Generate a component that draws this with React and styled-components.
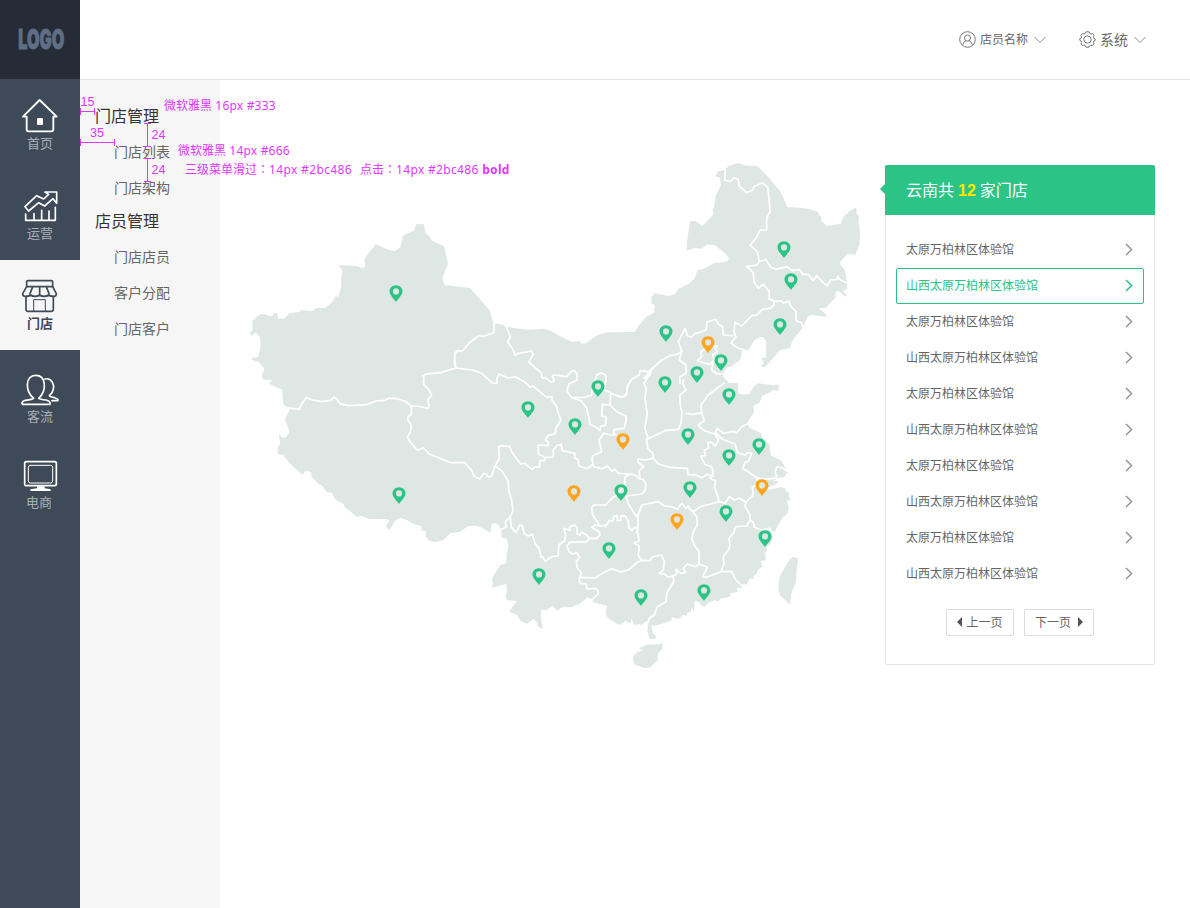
import React from "react";
import styled, { createGlobalStyle, css } from "styled-components";

const GlobalStyle = createGlobalStyle`
  * { box-sizing: border-box; }
  body {
    margin: 0;
    background: #fff;
    color: #666;
    font-family: "Noto Sans", "Noto Sans CJK SC", sans-serif;
    font-size: 12px;
  }
`;

const Page = styled.div`
  position: relative;
  display: flex;
  width: 1190px;
  height: 908px;
  overflow: hidden;
`;

const Sidebar = styled.nav`
  width: 80px;
  flex: none;
  background: #3f4a58;
`;

const LogoBox = styled.div`
  height: 79px;
  margin-bottom: 1px;
  background: #262c36;
  display: flex;
  align-items: center;
  justify-content: center;
`;

const LogoText = styled.span`
  margin-left: 2px;
  color: #5f6f87;
  font-family: Inter, sans-serif;
  font-size: 27px;
  font-weight: 900;
  line-height: 40px;
  -webkit-text-stroke: 0.9px #5f6f87;
  transform: scaleX(0.6);
`;

const NavItem = styled.a`
  display: flex;
  flex-direction: column;
  align-items: center;
  height: 90px;
  padding-top: ${(p) => p.$top}px;
  font-size: 13px;
  line-height: 20px;
  color: #a9afb6;
  svg { display: block; }
  ${(p) =>
    p.$active &&
    css`
      background: #f6f6f6;
      color: #3f4a58;
      font-weight: 700;
    `}
`;

const NavLabel = styled.span`
  margin-top: ${(p) => p.$gap}px;
  margin-left: ${(p) => p.$shift || 0}px;
`;

const Body = styled.div`
  flex: 1;
  display: flex;
  flex-direction: column;
`;

const Header = styled.header`
  height: 80px;
  border-bottom: 1px solid #e5e5e5;
  display: flex;
  align-items: center;
  justify-content: flex-end;
  gap: 33px;
  padding: 0 44px 0 0;
`;

const HeaderItem = styled.div`
  display: flex;
  align-items: center;
  gap: 4px;
  font-size: ${(p) => p.$size}px;
  line-height: 18px;
  white-space: nowrap;
`;

const Content = styled.div`
  flex: 1;
  display: flex;
  align-items: flex-start;
`;

const SubMenu = styled.aside`
  width: 140px;
  height: 828px;
  flex: none;
  padding-top: 21px;
  background: #f6f6f6;
`;

const MenuTitle = styled.div`
  height: 33px;
  padding-left: 15px;
  font-size: 16px;
  line-height: 30px;
  color: #333;
`;

const MenuLink = styled.a`
  display: block;
  padding-left: 34px;
  font-size: 14px;
  line-height: 36px;
  color: #666;
`;

const MapArea = styled.div`
  width: 630px;
  height: 530px;
  margin: 70px 15px 0 20px;
  flex: none;
  svg { display: block; }
`;

const Panel = styled.section`
  position: relative;
  width: 270px;
  height: 500px;
  margin-top: 85px;
  border: 1px solid #e6e6e6;
  border-top: 0;
  border-radius: 2px;
`;

const PanelHeader = styled.div`
  height: 50px;
  margin: 0 -1px;
  padding-left: 21px;
  border-radius: 2px 2px 0 0;
  background: #2bc486;
  color: #fff;
  font-size: 16px;
  line-height: 50px;
  b {
    margin: 0 4px;
    color: #ffe800;
    font-family: "Liberation Sans", sans-serif;
  }
  &::before {
    content: "";
    position: absolute;
    left: -6px;
    top: 19px;
    border: 5px solid transparent;
    border-left: 0;
    border-right-color: #2bc486;
  }
`;

const StoreList = styled.div`
  padding: 17px 10px 0;
`;

const StoreRow = styled.div`
  display: flex;
  align-items: center;
  justify-content: space-between;
  height: 36px;
  padding: 0 10px 2px 9px;
  border: 1px solid ${(p) => (p.$active ? "#2bc486" : "transparent")};
  border-radius: 2px;
  color: ${(p) => (p.$active ? "#2bc486" : "#666")};
`;

const Pager = styled.div`
  display: flex;
  gap: 10px;
  padding: 17px 0 0 60px;
`;

const PageButton = styled.button`
  display: flex;
  align-items: center;
  justify-content: center;
  gap: ${(p) => p.$gap}px;
  width: ${(p) => p.$width}px;
  height: 27px;
  padding: 0 0 1px;
  border: 1px solid #ddd;
  border-radius: 1px;
  background: #fff;
  color: #666;
  font: inherit;
`;

const Note = styled.span`
  position: absolute;
  left: ${(p) => p.$x}px;
  top: ${(p) => p.$y}px;
  color: #df37ff;
  font-family: ${(p) => (p.$digits ? '"Liberation Sans"' : '"Noto Sans", "Noto Sans CJK SC"')}, sans-serif;
  font-size: ${(p) => (p.$digits ? 12.5 : 12)}px;
  line-height: 16px;
  white-space: pre;
`;

const Latin = styled.span`
  letter-spacing: ${(p) => p.$spacing}px;
`;

const Colon = styled.span`
  font-family: "Noto Sans CJK TC", sans-serif;
`;

const Measure = styled.i`
  position: absolute;
  left: ${(p) => p.$x}px;
  top: ${(p) => p.$y}px;
  ${(p) =>
    p.$vertical
      ? css`
          width: 7px;
          height: ${p.$length}px;
          border: solid #df37ff;
          border-width: 1px 0;
          background: linear-gradient(#df37ff, #df37ff) 3px 0 / 1px 100% no-repeat;
        `
      : css`
          width: ${p.$length}px;
          height: 7px;
          border: solid #df37ff;
          border-width: 0 1px;
          background: linear-gradient(#df37ff, #df37ff) 0 3px / 100% 1px no-repeat;
        `}
`;

/* ---- icons, drawn on a grid of three units per pixel ---- */

const Icon = ({ box, children, width = 5 }) => {
  const [, , w, h] = box.split(" ").map(Number);
  return (
    <svg width={w / 3} height={h / 3} viewBox={box} fill="none" stroke="currentColor"
      strokeWidth={width} strokeLinejoin="round" strokeLinecap="round">
      {children}
    </svg>
  );
};

const White = styled.span`
  color: #fff;
`;

const HomeIcon = () => (
  <Icon box="60 294 120 105" width={5.5}>
    <path d="M80 350H69L119 300L170 350H160V388Q160 394 154 394H86Q80 394 80 388Z" />
    <rect x="111" y="354" width="18" height="21" rx="3" fill="currentColor" stroke="none" />
  </Icon>
);

const ChartIcon = () => (
  <Icon box="60 570 120 96">
    <path d="M75 620L110 587L131 597L146 583L135 576H170V610L159 596L134 618L116 608L86 633Z" />
    <path d="M77 642V661H166V622M102 659V641M125 659V631M147 659V633" />
  </Icon>
);

const StoreIcon = () => (
  <Icon box="60 72 120 102" width={5}>
    <path d="M80 95V80Q80 77 84 77H154Q158 77 158 80V95Z" />
    <path d="M80 95L68 116Q68 124 77 124Q87 124 92 120Q97 124 105 124Q114 124 119 120Q124 124 132 124Q141 124 146 120Q151 124 160 124Q169 124 169 116L158 95M97 98L90 116M119 98V116M140 98L147 116" />
    <path d="M78 125V163Q78 169 84 169H154Q160 169 160 163V125" />
    <path d="M101 168V134H136V168" strokeWidth="3" />
  </Icon>
);

const PeopleIcon = () => (
  <Icon box="60 354 120 99" width={5}>
    <path d="M101 430C74 407 76 361 107 361C139 361 141 407 116 430Q120 433 138 435Q153 439 150 448H67Q62 441 76 436Q98 433 101 430Z" />
    <path d="M135 372C157 367 163 392 160 402C158 414 153 417 148 422Q150 426 164 428Q178 433 173 437H156" />
  </Icon>
);

const MonitorIcon = () => (
  <Icon box="60 615 120 96">
    <rect x="74" y="620" width="95" height="72" rx="5" />
    <rect x="85" y="631" width="73" height="53" rx="6" strokeWidth="3" />
    <path d="M111 694H134V700L152 703V708H91V703L111 700Z" fill="currentColor" stroke="none" />
  </Icon>
);

const UserIcon = () => (
  <svg width="17" height="17" viewBox="0 0 17 17" fill="none" stroke="#777" strokeWidth="1">
    <circle cx="8.5" cy="8.5" r="7.8" />
    <circle cx="8.5" cy="7" r="3" />
    <path d="M3.8 13.6C4.2 11.3 5.8 10.2 7 9.8M13.2 13.6C12.8 11.3 11.2 10.2 10 9.8" />
  </svg>
);

const GearIcon = () => (
  <svg width="17" height="17" viewBox="0 0 17 17" fill="none" stroke="#777" strokeWidth="1" strokeLinejoin="round">
    <path d="M7 .8H10L10.6 2.3L12.1 3L13.7 2.5L15 4.4L14.4 5.8L14.8 7.2L16.2 8V9.4L14.8 10L14.4 11.5L15 12.9L13.4 14.6L12 14.1L10.6 14.8L10 16.2H7L6.4 14.8L5 14.1L3.6 14.6L2 12.9L2.6 11.5L2.2 10L.8 9.4V7.6L2.2 7.1L2.6 5.8L2 4.4L3.4 2.5L5 3L6.4 2.3Z" />
    <circle cx="8.5" cy="8.5" r="3.7" />
  </svg>
);

const ChevronIcon = styled.svg`
  margin-left: 2px;
`;

const ChevronDown = () => (
  <ChevronIcon width="12" height="8" viewBox="0 0 12 8" fill="none" stroke="#888" strokeWidth="1">
    <path d="M.5 1L6 6.5L11.5 1" />
  </ChevronIcon>
);

const ChevronRight = ({ active }) => (
  <svg width="8" height="13" viewBox="0 0 8 13" fill="none" stroke={active ? "#2bc486" : "#888"} strokeWidth={active ? 1.5 : 1.2}>
    <path d="M1 1L6.7 6.5L1 12" />
  </svg>
);

const Triangle = ({ left }) => (
  <svg width="5" height="10" viewBox="0 0 5 10" fill="#555">
    <path d={left ? "M5 0V10L0 5Z" : "M0 0V10L5 5Z"} />
  </svg>
);

/* ---- map: outlines are kept per tile, three units per pixel ---- */

const TILE = {
  nw: [240, 215],
  mid: [400, 310],
  ne: [600, 150],
  east: [600, 370],
  south: [600, 490],
  sw: [270, 420],
};

const project = ([tile, points]) =>
  points
    .split(" ")
    .map((pair) => {
      const [x, y] = pair.split(",").map(Number);
      return `${(TILE[tile][0] + x / 3).toFixed(1)},${(TILE[tile][1] + y / 3).toFixed(1)}`;
    })
    .join(" ");

const MAINLAND = [
  ["nw", "113,700 121,682 117,670 119,655 123,667 136,668 147,654 147,645 135,612 149,583 140,578 130,567 127,524 86,506 97,495 69,494 66,482 73,460 53,439 43,439 33,430 54,427 62,393 60,366 47,352 37,362 30,355 38,342 36,320 50,305 62,297 75,298 89,304 99,302 100,295 113,295 113,311 132,311 149,294 178,291 183,285 218,288 229,279 256,278 275,263 284,250 287,240 294,249 304,214 303,194 307,168 296,150 350,153 366,159 376,155 373,132 408,86 440,103 465,108 480,97 485,80 488,64 500,56 522,47 529,28 551,26 557,54 567,63 577,77 590,84 612,93 624,146 607,190 614,211 660,215"],
  ["mid", "210,-66 268,0 281,41 300,41 318,49 345,55 385,59 430,56 452,62 490,84 516,95 541,94 543,101 558,100 588,77 620,67 690,66"],
  ["ne", "104,545 116,527 136,503 163,487 164,466 154,460 155,440 164,429 205,438 225,433 236,416 265,403 283,387 292,361 308,358 343,339 380,335 387,326 380,314 360,298 343,285 318,284 306,296 285,294 260,302 261,275 270,213 286,213 307,228 341,193 338,175 342,172 347,137 363,105 360,83 346,79 354,64 375,59 385,49 416,39 438,47 471,48 500,76 542,126 562,171 600,173 630,178 655,186 656,196 665,201 663,212 680,228 723,221 731,199 753,181 769,172 770,192 777,197 775,215 780,245 779,280 768,311 760,314 743,311 720,337 723,347 735,359 741,400 740,417 728,424 740,435 736,441 720,425 708,424 706,443 690,460 678,473 656,475 680,495 676,501 633,494 623,500 608,533 578,570 570,593 540,601 496,650 484,651 483,645 491,641 485,624 498,622 499,576 490,561 480,561 463,571 444,602 425,604 425,612 420,630 397,647 388,652 379,653 368,672 370,680 384,695"],
  ["east", "385,39 414,39 415,70 422,73 447,73 455,60 465,46 474,40 522,46 540,44 534,55 538,63 522,60 505,69 486,78 481,94 478,98 461,107 462,127 441,160 449,174 482,188 487,204 508,222 512,256 545,272 552,286 562,307 552,322 530,325 522,333 535,332 530,342 505,352 480,358 505,360 540,352 555,355 560,366 570,368 566,375 571,389 560,392 565,410"],
  ["south", "567,50 563,70 546,85 532,110 525,125 508,121 520,140 513,160 498,172 503,183 494,187 498,210 482,213 487,230 473,240 470,252 460,258 462,268 448,265 440,285 432,280 425,293 410,295 414,305 390,310 392,320 360,326 356,335 345,330 320,342 315,351 304,347 296,335 284,332 281,366 276,352 271,365 262,369 260,378 248,374 243,385 225,385 216,382 214,392 165,408 154,406 158,428 170,440 163,448 150,446 142,425 145,393 136,395 125,406 117,402 103,406 94,384 92,400 76,393 60,405 45,398 20,380 17,365 22,348 0,342"],
  ["sw", "968,545 966,537 952,532 928,553 918,555 905,562 875,562 862,573 847,557 830,570 813,569 812,590 819,627 804,620 800,605 790,597 770,611 752,604 742,585 718,575 740,543 711,541 707,530 711,510 709,492 670,502 665,503 669,491 666,475 690,436 707,430 715,375 711,358 695,352 692,330 686,315 675,308 665,313 661,339 638,325 620,317 595,318 570,335 541,340 520,360 496,366 480,364 467,350 467,332 454,332 455,318 430,312 410,300 392,293 375,302 359,330 347,319 358,303 350,297 297,297 275,288 261,290 226,263 218,250 197,240 185,218 170,217 157,197 145,192 125,170 123,155 106,153 98,165 75,145 55,125 40,105 23,102 23,85"],
];

const ISLANDS = [
  ["south", "118,476 122,471 140,464 180,463 183,456 188,465 186,478 174,491 173,512 162,520 152,532 135,534 104,524 98,508 100,497 113,486 130,481"],
  ["south", "580,200 594,206 590,240 588,273 573,315 570,344 540,315 535,300 538,262 553,235 568,210"],
];

const BORDERS = [
  ["nw", "140,578 178,583 187,564 200,547 213,554 245,560 270,557 283,547 290,552 300,566 325,572 380,569 408,558 435,556 447,550 465,550 495,559 514,573 532,573 564,580 567,572 563,555 575,540 568,526 551,508 551,485 547,483 560,477 600,473 648,459"],
  ["nw", "514,573 514,597 504,605 504,615 514,632 512,648 502,667 512,683 533,706 550,698 568,717"],
  ["nw", "648,459 644,445 644,418 652,407 662,408"],
  ["mid", "88,432 153,458 193,457 215,481 222,499 239,507 252,490 260,493 265,502 275,498 284,470 298,445 296,410 302,407 330,410 335,425 362,463 374,460 397,479 402,472 419,470 419,453 433,451 437,442 460,441 460,420 470,407 483,403 487,422 524,430 524,443 535,450 536,467 562,476 578,463 583,470 605,476 622,468 636,484 645,478 655,490 690,492"],
  ["mid", "433,441 415,432 415,405 443,407 446,397 436,390 445,376 465,372 468,354 483,331 473,305 470,290 456,270 456,260 440,262 399,228 391,232 376,217 346,200 325,204 297,192 291,205 291,219 278,220 245,190 218,180 168,174 164,160 164,130 170,124 188,122 210,97 235,78 255,78 281,68 283,41"],
  ["mid", "318,49 331,80 323,97 337,115 345,136 356,130 395,123 400,133 386,156 423,188 427,203 440,206 454,217 463,212 457,200 463,195 500,200 515,183 524,181 532,195 531,210 507,222 501,243 515,263 555,262 575,255 577,242 583,215 590,195 603,188 617,196 619,207 615,225 612,240 632,247 630,285"],
  ["mid", "515,263 543,272 560,295 568,330 570,343 585,350 600,361 602,349 616,346 619,322 605,317 607,283 630,285 650,305 678,318 678,335 672,355 643,358 640,370 648,375 632,375 612,370 597,390 605,425 578,437 576,450 580,463"],
  ["mid", "632,250 668,262 680,255 684,225 690,215"],
  ["sw", "675,137 697,154 715,185 716,210 725,243 729,271 721,291 724,322 738,338 749,315 757,317 763,341 775,348 787,343 795,370 807,385 813,412 818,410 826,424 845,410 865,408 866,375 884,362 887,345 881,325 899,331 899,320 914,315 921,322 921,342 930,345 935,337 950,345 956,355 980,355 990,345 988,336 965,322 975,315 990,318 1007,315"],
  ["sw", "721,291 706,305 709,321 690,329"],
  ["sw", "956,357 950,365 899,367 891,378 897,395 907,402 920,398 929,411 919,425 922,445 934,458 927,482 932,490 948,492 952,507 980,505 986,520 966,540"],
  ["sw", "930,472 975,474 1000,458 1025,446 1050,456"],
  ["sw", "990,318 968,285 965,262 972,255 1008,255 1025,235 1040,225 1064,197 1065,178"],
  ["south", "15,110 22,102 27,92 38,93 42,78 52,77 52,92 63,90 62,78 75,77 85,93 86,112 97,122 102,112 112,113"],
  ["south", "60,246 85,240 115,215 130,211"],
  ["east", "75,340 75,322 90,312 105,315 120,327 130,328 138,343 135,363 125,372 78,378 85,402 103,430 113,445"],
  ["east", "120,327 117,302 132,290 115,278 113,267 135,270 158,265"],
  ["east", "152,0 150,12 132,40 139,55 135,85 142,130 134,175 143,200 140,210 143,235 158,250 160,265 175,282 210,292 262,295 264,315 285,314 307,323 322,313 340,320"],
  ["east", "143,207 195,182 235,178 243,160 246,128 240,100 240,75 258,60 248,40 250,30"],
  ["east", "258,130 280,133 305,128 303,105 325,75 360,48 373,40"],
  ["east", "305,128 313,152 294,165 313,182 345,192 352,175 370,190 400,184 410,189 425,170 441,162"],
  ["east", "345,192 356,210 345,228 335,217 323,217 326,235 313,240 316,257 302,258 315,283 335,290 340,310 330,325 347,333 343,352 352,375 357,395"],
  ["east", "345,187 368,208 405,222 413,248 435,256 442,248 455,250 445,275 436,276 428,295 445,305 470,323 495,328 522,325 530,320 525,305 532,290 550,295 558,302"],
  ["east", "470,323 475,340 457,352 460,375 437,397 418,385 403,390 388,380 375,400 357,395 300,410 280,425 270,418 265,408 258,415 245,400 232,418 215,410 193,408 175,395 125,405 113,440"],
  ["south", "437,37 435,48 450,75 450,90 440,108 407,110 400,130 387,145 390,165 385,180 370,200 372,220 363,245 395,245 407,270 427,287"],
  ["south", "450,88 460,98 463,112 485,120 508,115 512,122"],
  ["south", "277,62 290,80 292,105 280,125 275,145 283,165 297,185 297,222 288,230 262,222 250,235 257,248 243,250 228,238 230,252 218,258 205,262 193,252 178,250 190,240 193,215 185,195 170,198 155,202 150,212 125,212 115,195 118,168 103,160 118,152 112,125 115,100 112,75 125,50"],
  ["south", "297,222 322,232 308,260 320,262 363,245"],
  ["south", "218,258 222,272 200,310 198,335 172,350 163,375 148,385 145,397"],
  ["ne", "376,58 374,90 390,95 402,84 415,88 418,108 440,128 458,120 462,110 487,98 503,112 508,150 510,185 500,205 500,240 480,240 468,265 450,285 472,305 478,335 470,345 440,350 460,368 462,395 475,415 490,402 508,425 508,447 522,453 522,465 510,475 488,478 470,495 455,497 425,528 405,517 402,545 408,560 393,580 415,595 440,603"],
  ["ne", "478,335 497,328 512,352 528,358 562,350 578,362 598,358 608,373 625,373 640,392 650,377 668,397 682,407 692,390 710,388 713,378 718,388 740,398"],
  ["ne", "508,447 525,455 545,452 550,460 567,453 573,470 588,485 588,512 605,518 608,530"],
  ["ne", "400,557 370,555 368,530 355,522 348,508 322,515 318,540 300,547 285,550 275,562 262,557 256,535 235,575 245,602 235,612 210,617 185,630 155,657 145,665 120,662 118,675 95,688 82,710 80,730 65,742 33,732"],
  ["ne", "155,657 133,685 150,675 152,665"],
  ["ne", "245,602 238,630 258,645 258,670 240,680 240,700"],
  ["ne", "315,597 302,605 305,620 292,632 315,640 330,643 342,630 338,615 352,605 345,595 352,588 338,587"],
  ["ne", "340,632 335,660 350,672 368,672"],
];

const PINS = [
  [396, 285], [399, 487], [528, 401], [575, 418], [598, 380], [574, 485, 1], [621, 484], [609, 542],
  [539, 568], [623, 433, 1], [784, 241], [791, 273], [780, 318], [666, 325], [708, 336, 1], [721, 354],
  [697, 366], [665, 376], [729, 388], [688, 428], [759, 438], [729, 449], [762, 479, 1], [690, 481],
  [677, 513, 1], [726, 505], [765, 530], [641, 589], [704, 584],
];

const ChinaMap = () => (
  <svg width="630" height="530" viewBox="240 150 630 530">
    <g fill="#dfe7e4">
      <polygon points={MAINLAND.map(project).join(" ")} />
      {ISLANDS.map((s, i) => <polygon key={i} points={project(s)} />)}
    </g>
    <g fill="none" stroke="#fff" strokeWidth="1.7" strokeLinejoin="round" strokeLinecap="round">
      {BORDERS.map((s, i) => <polyline key={i} points={project(s)} />)}
    </g>
    {PINS.map(([x, y, orange]) => (
      <path key={`${x}-${y}`} transform={`translate(${x - 6.5} ${y + 0.3})`} fill={orange ? "#ffa41c" : "#2bc486"} fillRule="evenodd"
        d="M6.5 0C2.8 0 0 2.8 0 6.3C0 9.8 3.8 13 6.5 16.6C9.2 13 13 9.8 13 6.3C13 2.8 10.2 0 6.5 0ZM6.5 3A3.1 3.1 0 1 1 6.5 9.2A3.1 3.1 0 1 1 6.5 3Z" />
    ))}
  </svg>
);

const NAV = [
  { label: "首页", icon: HomeIcon, top: 18, gap: 0 },
  { label: "运营", icon: ChartIcon, top: 20, gap: 1 },
  { label: "门店", icon: StoreIcon, top: 19, gap: 0, active: true },
  { label: "客流", icon: PeopleIcon, top: 23, gap: 0 },
  { label: "电商", icon: MonitorIcon, top: 20, gap: 0, shift: -2 },
];

const MENU = [
  { title: "门店管理", links: ["门店列表", "门店架构"] },
  { title: "店员管理", links: ["门店店员", "客户分配", "门店客户"] },
];

const STORES = Array.from({ length: 10 }, (_, i) => (i % 2 ? "山西太原万柏林区体验馆" : "太原万柏林区体验馆"));

export default function App() {
  return (
    <>
      <GlobalStyle />
      <Page>
        <Sidebar>
          <LogoBox>
            <LogoText>LOGO</LogoText>
          </LogoBox>
          {NAV.map(({ label, icon: Glyph, top, gap, shift, active }) => (
            <NavItem key={label} $top={top} $active={active}>
              {active ? <Glyph /> : <White><Glyph /></White>}
              <NavLabel $gap={gap} $shift={shift}>{label}</NavLabel>
            </NavItem>
          ))}
        </Sidebar>
        <Body>
          <Header>
            <HeaderItem $size={12}><UserIcon />店员名称<ChevronDown /></HeaderItem>
            <HeaderItem $size={14}><GearIcon />系统<ChevronDown /></HeaderItem>
          </Header>
          <Content>
            <SubMenu>
              {MENU.map(({ title, links }) => (
                <div key={title}>
                  <MenuTitle>{title}</MenuTitle>
                  {links.map((l) => <MenuLink key={l}>{l}</MenuLink>)}
                </div>
              ))}
            </SubMenu>
            <MapArea><ChinaMap /></MapArea>
            <Panel>
              <PanelHeader>云南共<b>12</b>家门店</PanelHeader>
              <StoreList>
                {STORES.map((name, i) => (
                  <StoreRow key={i} $active={i === 1}>{name}<ChevronRight active={i === 1} /></StoreRow>
                ))}
              </StoreList>
              <Pager>
                <PageButton $width={68} $gap={4}><Triangle left />上一页</PageButton>
                <PageButton $width={70} $gap={7}>下一页<Triangle /></PageButton>
              </Pager>
            </Panel>
          </Content>
        </Body>
        <Note $x={80.5} $y={94} $digits>15</Note>
        <Measure $x={80} $y={108} $length={15} />
        <Note $x={90} $y={125} $digits>35</Note>
        <Measure $x={80} $y={139} $length={35} />
        <Note $x={151.5} $y={127} $digits>24</Note>
        <Measure $x={144} $y={123} $length={24} $vertical />
        <Note $x={151.5} $y={162} $digits>24</Note>
        <Measure $x={144} $y={158} $length={24} $vertical />
        <Note $x={164} $y={98}>微软雅黑<Latin $spacing={0.2}> 16px #333</Latin></Note>
        <Note $x={178} $y={143}>微软雅黑<Latin $spacing={0.2}> 14px #666</Latin></Note>
        <Note $x={185} $y={161}>三级菜单滑过<Colon>：</Colon><Latin $spacing={0.35}>14px #2bc486</Latin></Note>
        <Note $x={360} $y={161}>点击<Colon>：</Colon><Latin $spacing={0.33}>14px #2bc486 <b>bold</b></Latin></Note>
      </Page>
    </>
  );
}
